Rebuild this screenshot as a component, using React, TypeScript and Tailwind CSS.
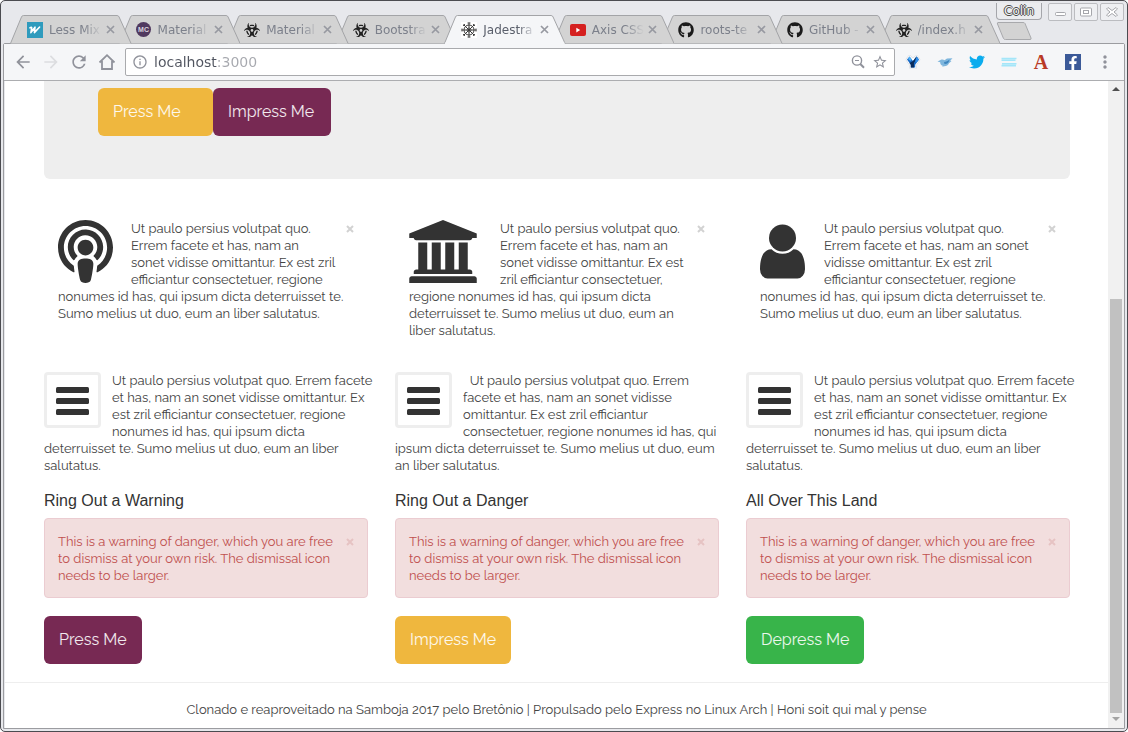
import { Fragment, type ReactNode } from "react";
import {
  FaBiohazard,
  FaFacebookF,
  FaGithub,
  FaPodcast,
  FaTwitter,
} from "react-icons/fa";
import {
  MdArrowBack,
  MdArrowForward,
  MdInfoOutline,
  MdMoreVert,
  MdRefresh,
  MdStarBorder,
} from "react-icons/md";

/* ---------- favicons and extension icons ---------- */

const LessIcon = () => (
  <svg viewBox="0 0 16 16" className="size-4">
    <rect width="16" height="16" fill="#2f9bbd" />
    <path d="M3 5.800c1.600-.8 2-.3 1.600.9L3.900 10.600 8 5.200 7.400 10.600 12.600 5" fill="none" stroke="#fff" strokeWidth="1.600" strokeLinecap="round" strokeLinejoin="round" />
  </svg>
);

const McIcon = () => (
  <span className="flex size-[15px] items-center justify-center rounded-full bg-[#50395f] font-['Liberation_Sans'] text-[7px] leading-none font-bold text-[#d9d3de]">
    MC
  </span>
);

const HazardIcon = () => <FaBiohazard className="size-4 text-[#222]" />;

const WheelIcon = () => (
  <svg viewBox="0 0 16 16" className="size-4">
    <rect width="16" height="16" fill="#fff" />
    <g fill="none" stroke="#3a3a3a">
      <circle cx="8" cy="8" r="5" strokeWidth="1" />
      <circle cx="8" cy="8" r="2" strokeWidth=".8" />
      <path d="M8 .5v15M.5 8h15M2.500 2.500l11 11M13.500 2.500l-11 11" strokeWidth="1" />
      <path d="M6.500 1h3M6.500 15h3M1 6.500v3M15 6.500v3M2 4l2-2M12 2l2 2M2 12l2 2M12 14l2-2" strokeWidth=".9" />
    </g>
  </svg>
);

const VideoIcon = () => (
  <svg viewBox="0 0 16 16" className="size-4">
    <rect y="2" width="16" height="12" rx="2" fill="#d5201f" />
    <path d="M6.300 5.800v4.600L10.200 8.100z" fill="#fff" />
  </svg>
);

const OctoIcon = () => <FaGithub className="size-4 text-[#1b1b1b]" />;

const VIcon = () => (
  <svg viewBox="0 0 16 16" className="size-4">
    <path d="M2.300 5.500 4.500 2.600 8 6l3.500-3.400 2.200 2.900-3.500 5.200v2.800H5.800v-2.800z" fill="#fff" stroke="#d9dce0" strokeWidth="3.200" strokeLinejoin="round" />
    <path d="M2.300 5.500 4.500 2.600 8 6l3.500-3.400 2.200 2.900-3.500 5.200v2.800H5.800v-2.800z" fill="#fff" stroke="#fff" strokeWidth="2" strokeLinejoin="round" />
    <path d="M2 5.500 4.500 2.600 8 7l3.500-4.400L14 5.500l-3.800 5.200v2.800H5.800v-2.800z" fill="#1769c6" />
    <path d="M8 7 11.500 2.600l1 1.200L9 8.800v4.700H5.800v-2.800L4.500 9z" fill="#0a2c5c" />
    <path d="M4.500 2.600 6.800 5.500 5.500 7 3 5z" fill="#4fb0f6" />
    <path d="M11.500 2.600 14 5.500l-2.600 3.500-1.200-2z" fill="#2d8be6" />
  </svg>
);

const BirdIcon = () => (
  <svg viewBox="0 0 16 16" className="size-4">
    <path d="M.5 7.500 3.500 6c1.500-.8 3-.6 4 .3L10 4.500l5.500-.3-2.300 2.600 1.300.2-2.500 2.300C11.200 11.500 9 12.500 6.800 12.300L5.500 13l.2-1.200C3.800 11 3 9.500 3.200 8.200z" fill="#7fb6dd" />
    <path d="M7 8c2-.2 4-1.200 5.500-2.600C12 8.500 10 10.300 7.500 10z" fill="#3f86bf" />
  </svg>
);

const ScreenIcon = () => (
  <svg viewBox="0 0 16 16" className="size-4">
    <path d="M.5 4.500h15M.5 6.300h14M1 9.800h14.500M.5 11.600H15" stroke="#a4e6f9" strokeWidth="1.600" />
  </svg>
);

const FbIcon = () => (
  <span className="flex size-4 items-end justify-end bg-[#3b5998] pr-px">
    <FaFacebookF className="size-3.5 text-white" />
  </span>
);

const CrossIcon = () => (
  <svg viewBox="0 0 9 9" className="size-[9px]">
    <path d="M1 1l7 7M8 1 1 8" stroke="currentColor" strokeWidth="1.700" />
  </svg>
);

const HomeIcon = () => (
  <svg viewBox="0 0 18 18" className="size-[18px]">
    <path d="M1.500 9.500 9 2.200l7.500 7.300M4 8v8h10V8" fill="none" stroke="currentColor" strokeWidth="1.800" />
  </svg>
);

const ZoomOutIcon = () => (
  <svg viewBox="0 0 16 16" className="size-4">
    <circle cx="7" cy="6.500" r="4.600" fill="none" stroke="currentColor" strokeWidth="1.400" />
    <path d="M10.300 10 14 13.700" stroke="currentColor" strokeWidth="2" />
    <path d="M5 6.500h4" stroke="currentColor" strokeWidth="1.200" />
  </svg>
);

/* ---------- page icons ---------- */

const BankIcon = () => (
  <svg viewBox="0 0 1920 1792" className="h-[63px] w-[68px]" fill="currentColor">
    <path d="M960 0l960 384v128h-128q0 26-20.500 45t-48.500 19h-1526q-28 0-48.500-19t-20.500-45h-128v-128zm-704 640h256v768h128v-768h256v768h128v-768h256v768h128v-768h256v768h59q28 0 48.500 19t20.500 45v64h-1664v-64q0-26 20.500-45t48.500-19h59v-768zm1595 960q28 0 48.500 19t20.500 45v128h-1920v-128q0-26 20.500-45t48.500-19h1782z" />
  </svg>
);

const UserIcon = () => (
  <svg viewBox="0 0 1280 1792" className="h-[63px] w-[45px]" fill="currentColor">
    <path d="M1280 1399q0 109-62.500 187t-150.500 78h-854q-88 0-150.500-78t-62.500-187q0-85 8.500-160.500t31.500-152t58.500-131t94-89t134.500-34.500q131 128 313 128t313-128q76 0 134.500 34.500t94 89t58.500 131t31.500 152t8.500 160.500z" />
    <circle cx="640" cy="512" r="384" />
  </svg>
);

const BarsIcon = () => (
  <svg viewBox="0 0 33 28" className="h-7 w-[33px]" fill="currentColor">
    <rect y="0" width="33" height="6" rx="1.500" />
    <rect y="11" width="33" height="6" rx="1.500" />
    <rect y="22" width="33" height="6" rx="1.500" />
  </svg>
);

/* ---------- browser chrome ---------- */

type Tab = { title: string; icon: ReactNode; layer: string; active?: boolean };

const tabs: Tab[] = [
  { title: "Less Mix", icon: <LessIcon />, layer: "z-9" },
  { title: "Material", icon: <McIcon />, layer: "z-8" },
  { title: "Material", icon: <HazardIcon />, layer: "z-7" },
  { title: "Bootstra", icon: <HazardIcon />, layer: "z-6" },
  { title: "Jadestra", icon: <WheelIcon />, layer: "z-20", active: true },
  { title: "Axis CSS", icon: <VideoIcon />, layer: "z-5" },
  { title: "roots-te", icon: <OctoIcon />, layer: "z-4" },
  { title: "GitHub -", icon: <OctoIcon />, layer: "z-3" },
  { title: "/index.h", icon: <HazardIcon />, layer: "z-2" },
];

function BrowserTab({ tab }: { tab: Tab }) {
  return (
    <div className={`relative -mr-[13px] h-[29px] min-w-0 flex-1 ${tab.layer}`}>
      <svg viewBox="0 0 122 29" preserveAspectRatio="none" className="absolute inset-0 size-full">
        <path
          d="M.5 28.500 11.500 2q.6-1.500 2-1.500h94q1.400 0 2 1.500L121.500 28.500"
          fill={tab.active ? "#f5f6f8" : "#d3d3d3"}
          stroke="#a3a4a7"
          vectorEffect="non-scaling-stroke"
        />
        {tab.active && <path d="M1 28.500h120" stroke="#f5f6f8" strokeWidth="2" />}
      </svg>
      <div className="relative flex h-full items-center px-[17px]">
        <span className="flex w-4 shrink-0 justify-center">{tab.icon}</span>
        <span
          className={`ml-1.5 min-w-0 flex-1 mask-r-from-65% mask-r-to-100% text-xs leading-4 whitespace-nowrap ${
            tab.active ? "text-[#5a5f6b]" : "text-[#7c808b]"
          }`}
        >
          {tab.title}
        </span>
        <button type="button" aria-label={`Close ${tab.title}`} className="ml-1 shrink-0 text-[#9799a1]">
          <CrossIcon />
        </button>
      </div>
    </div>
  );
}

function WindowButton({ label, children }: { label: string; children: ReactNode }) {
  return (
    <button
      type="button"
      aria-label={label}
      className="flex h-[18px] w-6 items-center justify-center rounded-xs border border-[#bbbcc0] bg-[#eeeff2]"
    >
      <svg viewBox="0 0 14 12" className="h-3 w-3.5" fill="#fff" stroke="#a5a6ab">
        {children}
      </svg>
    </button>
  );
}

function TitleBar() {
  return (
    <header className="flex h-[43px] shrink-0 items-end pl-[9px]">
      <div className="flex min-w-0 flex-1 pr-[9px]">
        {tabs.map((tab, i) => (
          <BrowserTab key={i} tab={tab} />
        ))}
      </div>
      <div className="flex h-full w-[131px] shrink-0 flex-col">
        <div className="flex h-[21px] items-start justify-between pt-0.5 pr-[3px]">
          <button
            type="button"
            className="h-[17px] w-[46px] rounded-b-sm border border-t-0 border-[#a5a6ab] bg-[#ebecef] text-center text-xs leading-4 text-[#f4f4f4] [text-shadow:1px_0_#4a4a4a,-1px_0_#4a4a4a,0_1px_#4a4a4a,0_-1px_#4a4a4a]"
          >
            Colin
          </button>
          <div className="flex gap-0.5">
            <WindowButton label="Minimise">
              <rect x="2.500" y="6.500" width="10" height="3" rx="1" />
            </WindowButton>
            <WindowButton label="Maximise">
              <rect x="1.500" y="2" width="11" height="8" rx="1" />
              <rect x="4.500" y="4.500" width="5" height="3" />
            </WindowButton>
            <WindowButton label="Close">
              <path d="M3 1.500 7 4.500 11 1.500 12.500 3 9 6l3.500 3L11 10.500 7 7.500 3 10.500 1.500 9 5 6 1.500 3z" />
            </WindowButton>
          </div>
        </div>
        <button type="button" aria-label="New tab" className="w-9">
          <svg viewBox="0 0 36 18" className="h-[18px] w-9">
            <path d="M2 .5h25q1.500 0 2 1L35 16q.5 1.500-1 1.500H9.500q-1.500 0-2-1L1.500 2q-.5-1.500.5-1.500z" fill="#d3d3d3" stroke="#a8a9ac" />
          </svg>
        </button>
      </div>
    </header>
  );
}

const extensions = [
  { name: "V", icon: <VIcon /> },
  { name: "Bird", icon: <BirdIcon /> },
  { name: "Twitter", icon: <FaTwitter className="size-4 text-[#0bacee]" /> },
  { name: "Screen", icon: <ScreenIcon /> },
  { name: "Typeface", icon: <span className="font-['Liberation_Serif'] text-xl leading-4 font-bold text-[#b93a26]">A</span> },
  { name: "Facebook", icon: <FbIcon /> },
];

function ToolButton({ label, children }: { label: string; children: ReactNode }) {
  return (
    <button type="button" aria-label={label} className="flex w-7 items-center justify-center">
      {children}
    </button>
  );
}

function Toolbar() {
  return (
    <nav className="flex h-[37px] shrink-0 items-center border-b border-[#acadb0] bg-[#f5f6f8] pr-[3px] pl-[5px] text-[#90929b]">
      <ToolButton label="Back"><MdArrowBack className="size-5" /></ToolButton>
      <span className="flex text-[#dcdde0]">
        <ToolButton label="Forward"><MdArrowForward className="size-5" /></ToolButton>
      </span>
      <ToolButton label="Reload"><MdRefresh className="size-5" /></ToolButton>
      <ToolButton label="Home"><HomeIcon /></ToolButton>
      <div className="ml-1 flex h-7 min-w-0 flex-1 items-center rounded-xs border border-[#a9aaad] bg-white px-1.5">
        <MdInfoOutline className="size-4 shrink-0" />
        <input
          aria-label="Address"
          defaultValue="localhost:3000"
          className="ml-1.5 min-w-0 flex-1 bg-linear-to-r from-[#50545f] from-[63px] to-[#a6a8ae] to-[63px] bg-clip-text text-sm text-transparent outline-none"
        />
        <button type="button" aria-label="Zoom out"><ZoomOutIcon /></button>
        <button type="button" aria-label="Bookmark" className="ml-1.5"><MdStarBorder className="size-4" /></button>
      </div>
      <div className="ml-0.5 flex">
        {extensions.map((e) => (
          <button key={e.name} type="button" aria-label={e.name} className="flex w-8 items-center justify-center">
            {e.icon}
          </button>
        ))}
        <button type="button" aria-label="Menu" className="flex w-8 items-center justify-center">
          <MdMoreVert className="size-5" />
        </button>
      </div>
    </nav>
  );
}

/* ---------- page ---------- */

const Lines = ({ lines }: { lines: string[] }) => (
  <>
    {lines.map((line, i) => (
      <Fragment key={i}>
        {i > 0 && <br />}
        {line}
      </Fragment>
    ))}
  </>
);

const features = [
  {
    icon: <FaPodcast className="h-[63px] w-[55px]" />,
    lines: [
      "Ut paulo persius volutpat quo.",
      "Errem facete et has, nam an",
      "sonet vidisse omittantur. Ex est zril",
      "efficiantur consectetuer, regione",
      "nonumes id has, qui ipsum dicta deterruisset te.",
      "Sumo melius ut duo, eum an liber salutatus.",
    ],
    gap: "mr-[18px]",
  },
  {
    icon: <BankIcon />,
    lines: [
      "Ut paulo persius volutpat quo.",
      "Errem facete et has, nam an",
      "sonet vidisse omittantur. Ex est",
      "zril efficiantur consectetuer,",
      "regione nonumes id has, qui ipsum dicta",
      "deterruisset te. Sumo melius ut duo, eum an",
      "liber salutatus.",
    ],
    gap: "mr-[23px]",
  },
  {
    icon: <UserIcon />,
    lines: [
      "Ut paulo persius volutpat quo.",
      "Errem facete et has, nam an sonet",
      "vidisse omittantur. Ex est zril",
      "efficiantur consectetuer, regione",
      "nonumes id has, qui ipsum dicta deterruisset te.",
      "Sumo melius ut duo, eum an liber salutatus.",
    ],
    gap: "mr-[19px]",
  },
];

const menuLines = [
  "Ut paulo persius volutpat quo. Errem facete",
  "et has, nam an sonet vidisse omittantur. Ex",
  "est zril efficiantur consectetuer, regione",
  "nonumes id has, qui ipsum dicta",
  "deterruisset te. Sumo melius ut duo, eum an liber",
  "salutatus.",
];

const notices = [
  {
    title: "Ring Out a Warning",
    lines: menuLines,
    button: "Press Me",
    color: "bg-[#772953]",
  },
  {
    title: "Ring Out a Danger",
    lines: [
      "\u00a0 Ut paulo persius volutpat quo. Errem",
      "facete et has, nam an sonet vidisse",
      "omittantur. Ex est zril efficiantur",
      "consectetuer, regione nonumes id has, qui",
      "ipsum dicta deterruisset te. Sumo melius ut duo, eum",
      "an liber salutatus.",
    ],
    button: "Impress Me",
    color: "bg-[#efb73e]",
  },
  {
    title: "All Over This Land",
    lines: menuLines,
    button: "Depress Me",
    color: "bg-[#38b44a]",
  },
];

const warning = [
  "This is a warning of danger, which you are free",
  "to dismiss at your own risk. The dismissal icon",
  "needs to be larger.",
];

function Dismiss({ tone }: { tone: string }) {
  return (
    <button type="button" aria-label="Dismiss" className={`mt-[5px] shrink-0 self-start ${tone}`}>
      <svg viewBox="0 0 8 8" className="size-2">
        <path d="M1 1l6 6M7 1 1 7" stroke="currentColor" strokeWidth="2" />
      </svg>
    </button>
  );
}

function BigButton({ className, children }: { className: string; children: ReactNode }) {
  return (
    <button type="button" className={`h-12 rounded-md px-[15px] text-left text-base leading-6 whitespace-nowrap text-white/90 ${className}`}>
      {children}
    </button>
  );
}

function Page() {
  return (
    <main className="flex min-w-0 flex-1 flex-col overflow-hidden bg-white font-[Raleway,Lato,sans-serif] text-[13px] leading-[17px] text-[#444]">
      <div className="pr-[38px] pl-[39px]">
        <section className="flex h-[98px] items-start rounded-b-md bg-[#eee] pt-[7px] pl-[54px]">
          <BigButton className="w-[115px] bg-[#efb73e]">Press Me</BigButton>
          <BigButton className="w-[118px] bg-[#772953]">Impress Me</BigButton>
        </section>

        <section className="mt-[26px] grid grid-cols-3 gap-[27px]">
          {features.map((f, i) => (
            <article key={i} className="flex px-3.5 py-[15px]">
              <p className="min-w-0 flex-1 whitespace-nowrap">
                <span className={`float-left text-[#333] ${f.gap}`}>{f.icon}</span>
                <Lines lines={f.lines} />
              </p>
              <Dismiss tone="text-[#d2d2d2]" />
            </article>
          ))}
        </section>

        <section className="mt-[18px] grid grid-cols-3 gap-[27px]">
          {notices.map((n) => (
            <article key={n.title}>
              <p className="whitespace-nowrap">
                <span className="float-left mr-[11px] flex h-14 w-[57px] items-center justify-center rounded-sm border-3 border-[#eee] pt-0.5 text-[#333]">
                  <BarsIcon />
                </span>
                <Lines lines={n.lines} />
              </p>
              <h4 className="mt-[17px] font-['Liberation_Sans',sans-serif] text-base leading-5 text-[#333]">{n.title}</h4>
              <div role="alert" className="mt-[7px] flex rounded-sm border border-[#ebccd1] bg-[#f2dede] px-[13px] pt-3.5 pb-[13px] text-[#c0504e]">
                <p className="min-w-0 flex-1 whitespace-nowrap">
                  <Lines lines={warning} />
                </p>
                <Dismiss tone="text-[#e6c3c3]" />
              </div>
              <BigButton className={`mt-[18px] ${n.color}`}>{n.button}</BigButton>
            </article>
          ))}
        </section>
      </div>
      <footer className="mt-[18px] border-t border-[#eee] pt-[18px] text-center">
        Clonado e reaproveitado na Samboja 2017 pelo Bretônio | Propulsado pelo Express no Linux Arch | Honi soit qui mal y pense
      </footer>
    </main>
  );
}

function Scrollbar() {
  return (
    <div aria-hidden="true" className="flex w-4 shrink-0 flex-col items-center bg-[#f1f1f1] pt-1.5 pb-[7px]">
      <svg viewBox="0 0 8 4" className="h-1 w-2"><path d="M0 4 4 0l4 4z" fill="#505050" /></svg>
      <div className="flex w-full flex-1 flex-col pt-2 pb-1">
        <div className="flex-[200]" />
        <div className="mx-0.5 flex-[413] bg-[#c1c1c1]" />
      </div>
      <svg viewBox="0 0 8 4" className="h-1 w-2"><path d="M0 0l4 4 4-4z" fill="#a3a3a3" /></svg>
    </div>
  );
}

export default function App() {
  return (
    <div className="h-screen bg-white">
      <div className="flex h-full flex-col overflow-hidden rounded-[5px] border border-[#4b4b50] bg-[#e7e8ec] font-['DejaVu_Sans',sans-serif]">
        <TitleBar />
        <div className="mx-0.5 -mt-px mb-0.5 flex min-h-0 flex-1 flex-col rounded-t-xs border border-[#9b9ca0]">
          <Toolbar />
          <div className="flex min-h-0 flex-1 pl-px">
            <Page />
            <Scrollbar />
          </div>
        </div>
      </div>
    </div>
  );
}
